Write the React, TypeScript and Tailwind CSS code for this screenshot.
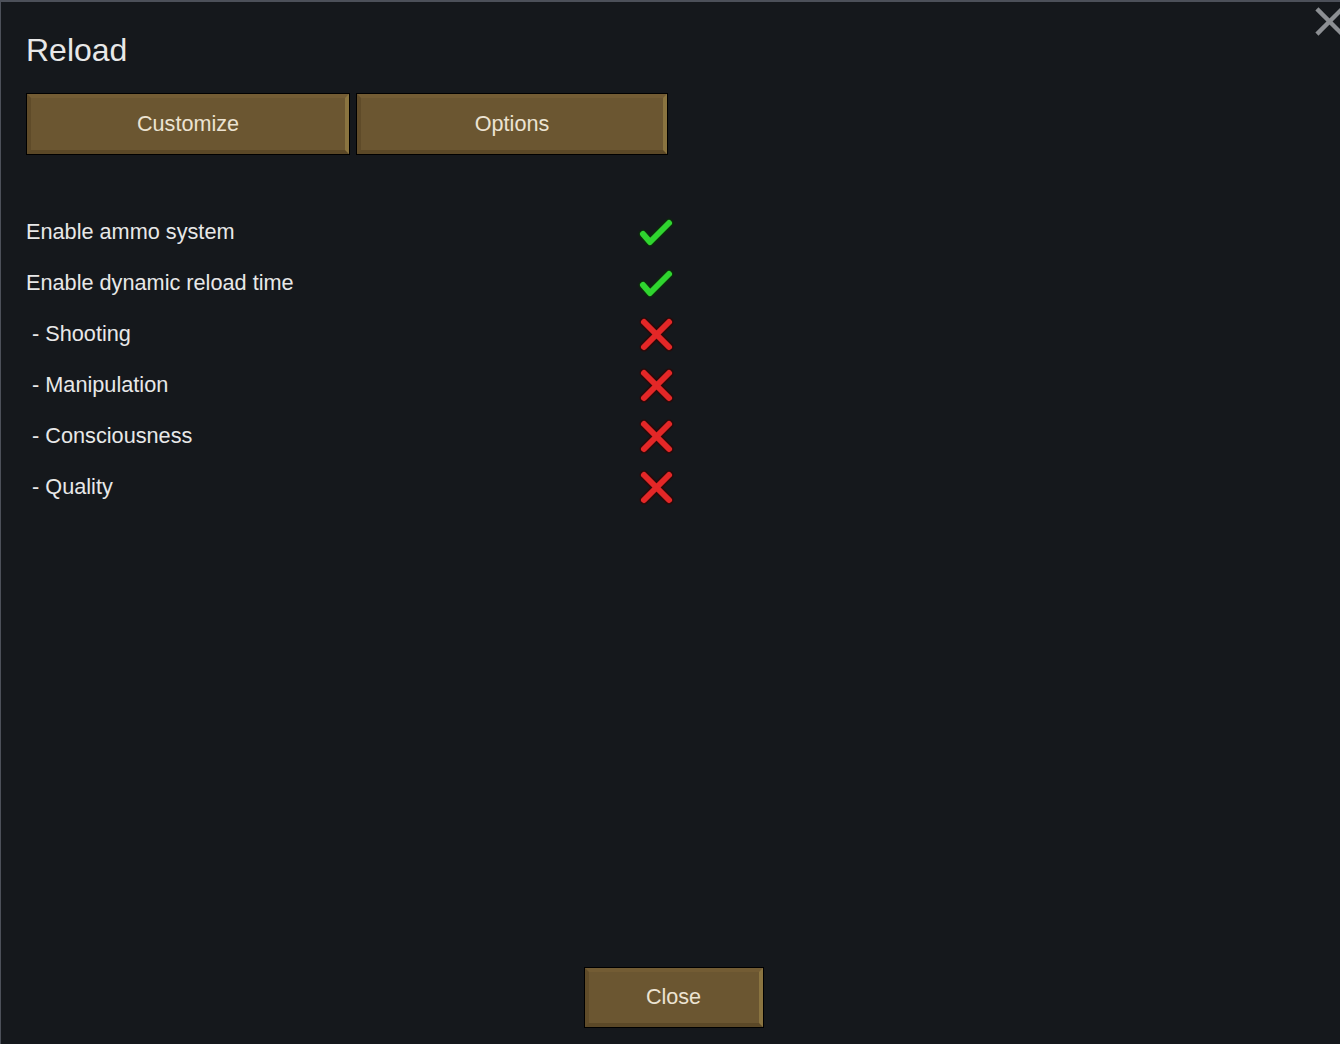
import React from "react";

const font = { fontFamily: '"Liberation Sans", Arial, sans-serif' };

function Check() {
  return (
    <svg width="36" height="36" viewBox="0 0 36 36">
      <polyline points="5,18 12,26 31,7" fill="none" stroke="#0d2a0d" strokeWidth="9" strokeLinecap="round" strokeLinejoin="round" />
      <polyline points="5,18 12,26 31,7" fill="none" stroke="#2fd52f" strokeWidth="6" strokeLinecap="round" strokeLinejoin="round" />
    </svg>
  );
}

function Cross() {
  return (
    <svg width="36" height="36" viewBox="0 0 36 36">
      <g fill="none" strokeLinecap="round">
        <line x1="6" y1="5" x2="31" y2="30" stroke="#2a0a0a" strokeWidth="9" />
        <line x1="31" y1="5" x2="6" y2="30" stroke="#2a0a0a" strokeWidth="9" />
        <line x1="6" y1="5" x2="31" y2="30" stroke="#e42727" strokeWidth="6" />
        <line x1="31" y1="5" x2="6" y2="30" stroke="#e42727" strokeWidth="6" />
      </g>
    </svg>
  );
}

function Btn({ label, w, h }: { label: string; w: string; h: string }) {
  return (
    <div className={`${w} ${h} border border-black flex`}>
      <div className="flex-1 flex items-center justify-center bg-[#6b5631] border-[4px] border-t-[#735c34] border-l-[#5f4b29] border-r-[#8a7440] border-b-[#5b4827] text-[21.6px] text-[#ece3d2]">
        {label}
      </div>
    </div>
  );
}

export default function App() {
  const rows: [string, boolean][] = [
    ["Enable ammo system", true],
    ["Enable dynamic reload time", true],
    [" - Shooting", false],
    [" - Manipulation", false],
    [" - Consciousness", false],
    [" - Quality", false],
  ];
  return (
    <div style={font} className="relative w-[1340px] h-[1044px] bg-[#15181c] border-t-2 border-l border-[#4c5059] flex flex-col overflow-hidden">
      <div className="absolute right-[-5px] top-[4px]">
        <svg width="31" height="31" viewBox="0 0 32 32">
          <line x1="3" y1="3" x2="29" y2="29" stroke="#8c8f93" strokeWidth="4.5" />
          <line x1="29" y1="3" x2="3" y2="29" stroke="#8c8f93" strokeWidth="4.5" />
        </svg>
      </div>
      <div className="pl-[25px] pt-[28px] text-[32px] leading-[40px] text-[#e8e8e8]">Reload</div>
      <div className="pl-[25px] mt-[23px] flex gap-[6px]">
        <Btn label="Customize" w="w-[324px]" h="h-[62px]" />
        <Btn label="Options" w="w-[312px]" h="h-[62px]" />
      </div>
      <div className="pl-[25px] mt-[52px] flex flex-col">
        {rows.map(([label, on]) => (
          <div key={label} className="h-[51px] flex items-center">
            <div className="w-[612px] text-[21.7px] text-[#e8e8e8] whitespace-pre">{label}</div>
            <div className={on ? "w-[36px] h-[36px] mt-[2px]" : "w-[36px] h-[36px]"}>{on ? <Check /> : <Cross />}</div>
          </div>
        ))}
      </div>
      <div className="mt-auto mb-[16px] flex justify-center pl-[6px]">
        <Btn label="Close" w="w-[180px]" h="h-[61px]" />
      </div>
    </div>
  );
}
